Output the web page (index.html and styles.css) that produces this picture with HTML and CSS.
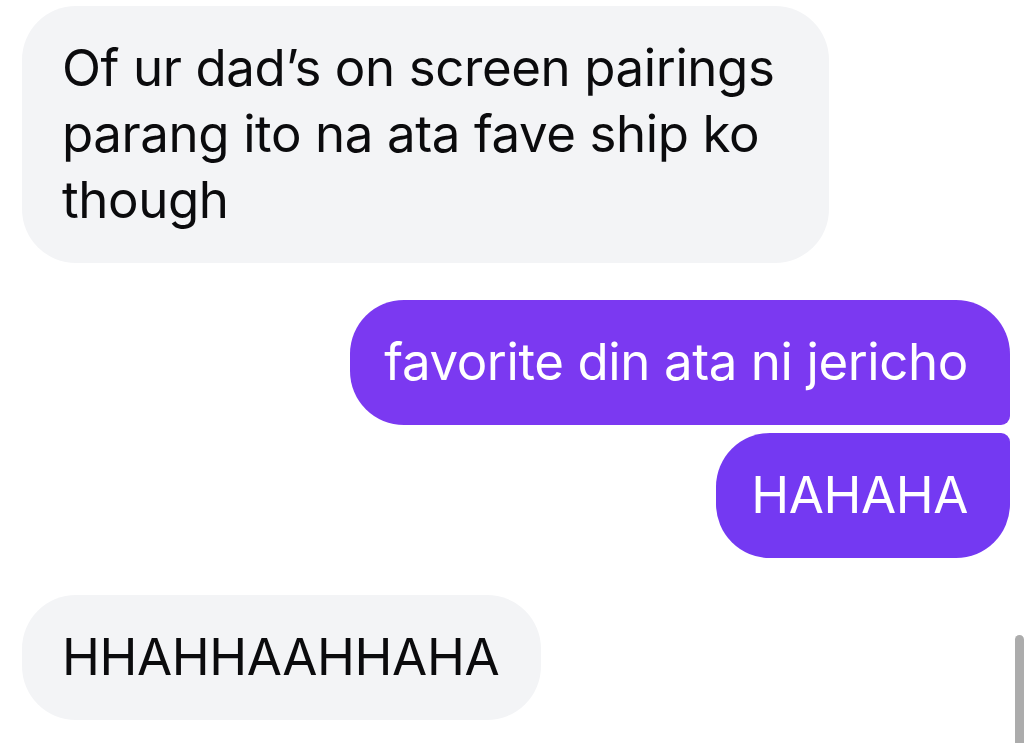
FILE: index.html
```html
<!DOCTYPE html>
<html lang="tl">
<head>
<meta charset="utf-8">
<title>Chat</title>
<link rel="stylesheet" href="styles.css">
</head>
<body>
<main class="thread">
  <div class="msg in first">Of ur dad’s on screen pairings parang ito na ata fave ship ko though</div>
  <div class="group out">
    <div class="msg out top">favorite din ata ni jericho</div>
    <div class="msg out bottom">HAHAHA</div>
  </div>
  <div class="msg in last">HHAHHAAHHAHA</div>
</main>
<div class="scroll-thumb"></div>
</body>
</html>
```

FILE: styles.css
```css
html, body {
  margin: 0;
  padding: 0;
  background: #ffffff;
  height: 100%;
  overflow: hidden;
}

.thread {
  display: flex;
  flex-direction: column;
  align-items: flex-start;
  gap: 37px;
  padding: 6px 24px 0 22px;
  font-family: "Inter", "Liberation Sans", sans-serif;
  font-size: 51px;
  line-height: 66px;
  letter-spacing: -0.4px;
}

.msg {
  box-sizing: border-box;
  padding: 29px 40px 30px 40px;
  border-radius: 54px;
}

.msg.in {
  background: #f3f4f6;
  color: #0b0b0d;
}

.msg.first {
  width: 807px;
}

.msg.last {
  padding-right: 42px;
}

.group {
  align-self: stretch;
  display: flex;
  flex-direction: column;
  align-items: flex-end;
  gap: 8px;
}

.msg.out {
  color: #ffffff;
}

.msg.out.top {
  background: #7b39f1;
  border-radius: 54px 54px 9px 54px;
  padding-left: 34px;
  padding-right: 42px;
}

.msg.out.bottom {
  background: #7439f2;
  border-radius: 54px 9px 54px 54px;
  padding-left: 35px;
  padding-right: 42px;
}

.scroll-thumb {
  position: absolute;
  left: 1015px;
  top: 635px;
  width: 9px;
  height: 120px;
  border-radius: 5px;
  background: #acacac;
}
```
